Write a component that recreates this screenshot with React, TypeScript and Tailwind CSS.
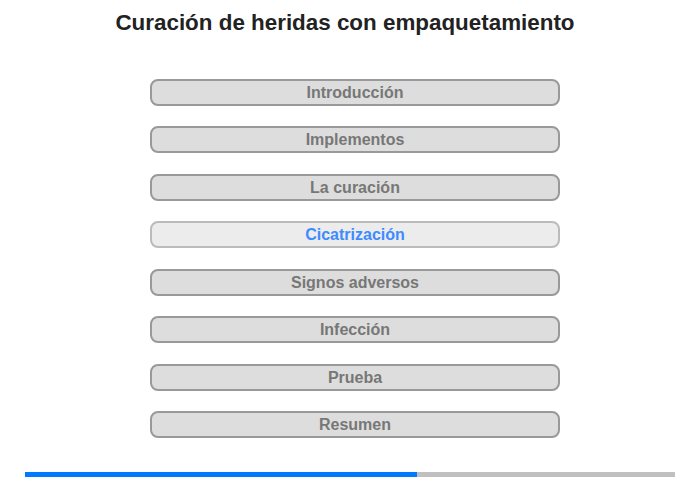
import React from 'react';

const sections = [
    'Introducción',
    'Implementos',
    'La curación',
    'Cicatrización',
    'Signos adversos',
    'Infección',
    'Prueba',
    'Resumen',
];

const active = 3;

const App: React.FC = () => {
    return (
        <div className="w-[700px] h-[480px] bg-white font-['Liberation_Sans',Arial,sans-serif]">
            <h1 className="pt-[10px] text-center text-[22.4px] leading-[26px] font-bold text-[#222222] -ml-[10px]">
                Curación de heridas con empaquetamiento
            </h1>

            <div className="mt-[43px] ml-[150px] w-[410px] flex flex-col gap-[20.43px]">
                {sections.map((s, i) => (
                    <button
                        key={s}
                        className={`h-[27px] w-full rounded-[8px] border-2 text-[16px] leading-[23px] font-bold text-center ${
                            i === active
                                ? 'bg-[#ececec] border-[#bbbbbb] text-[#3d8bff]'
                                : 'bg-[#dddddd] border-[#999999] text-[#777777]'
                        }`}
                    >
                        {s}
                    </button>
                ))}
            </div>

            <div className="mt-[34px] ml-[25px] w-[650px] h-[5px] bg-[#c0c0c0] flex">
                <div className="w-[392px] h-full bg-[#007bff]" />
            </div>
        </div>
    );
};

export default App;
